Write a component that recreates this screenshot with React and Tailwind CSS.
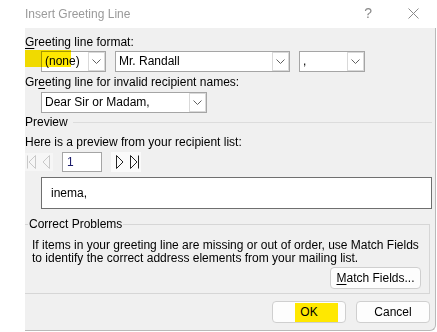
import React from "react";

function Chevron() {
  return (
    <svg width="9" height="5" viewBox="0 0 9 5" className="block">
      <path d="M0.5 0.5 L4.5 4.5 L8.5 0.5" fill="none" stroke="#606060" strokeWidth="1" />
    </svg>
  );
}

function Combo({ text, className = "", h = "h-[21px]" }) {
  return (
    <div className={`flex ${h} border border-[#a5a5a5] bg-white ${className}`}>
      <div className="flex-1 flex items-center pl-[3px] text-black whitespace-nowrap overflow-hidden">{text}</div>
      <div className="w-[17px] flex items-center justify-center border border-[#d9d9d9] bg-white">
        <Chevron />
      </div>
    </div>
  );
}

function NavIcon({ kind, color }) {
  const tri = {
    first: "M10.5 1.5 L10.5 14.5 L4 8 Z",
    prev: "M10.5 1.5 L10.5 14.5 L4 8 Z",
    next: "M3.5 1.5 L3.5 14.5 L10 8 Z",
    last: "M3.5 1.5 L3.5 14.5 L10 8 Z",
  }[kind];
  return (
    <svg width="14" height="16" viewBox="0 0 14 16" className="block">
      <path d={tri} fill="none" stroke={color} strokeWidth="1" strokeLinejoin="miter" />
      {kind === "first" && <path d="M2.5 1.5 L2.5 14.5" stroke={color} strokeWidth="1" />}
      {kind === "last" && <path d="M11.5 1.5 L11.5 14.5" stroke={color} strokeWidth="1" />}
    </svg>
  );
}

function Btn({ children, className = "" }) {
  return (
    <div className={`flex items-center justify-center border border-[#cfcfcf] rounded-[4px] bg-[#fdfdfd] text-black ${className}`}>
      {children}
    </div>
  );
}

export default function App() {
  return (
    <div className="w-[437px] h-[332px] bg-white flex flex-col text-[12px] leading-[15px] text-black font-['Liberation_Sans',Arial,sans-serif] overflow-hidden">
      {/* title bar */}
      <div className="h-[28px] flex items-center pl-[25px] shrink-0">
        <span className="text-[#9a9a9a] text-[12px]">Insert Greeting Line</span>
        <div className="flex-1" />
        <span className="text-[#8a8a8a] text-[14px] leading-none mr-[36px] mb-[2px]">?</span>
        <svg width="11" height="11" viewBox="0 0 11 11" className="mr-[18px] mb-[2px]">
          <path d="M0.5 0.5 L10.5 10.5 M10.5 0.5 L0.5 10.5" stroke="#8a8a8a" strokeWidth="1" />
        </svg>
      </div>
      {/* body */}
      <div className="flex flex-1 mb-[1px]">
        <div className="w-[25px] shrink-0" />
        <div className="w-[411px] bg-[#f0f0f0] border-r border-b border-[#b9b9b9] rounded-br-[6px] flex flex-col relative">
          <div className="mt-[7px]"><span className="underline underline-offset-2">G</span>reeting line format:</div>
          <div className="mt-[1px] flex relative">
            <Combo text="(none)" className="ml-[16px] w-[65px]" />
            <Combo text="Mr. Randall" className="ml-[9px] w-[175px]" />
            <Combo text="," className="ml-[9px] w-[66px]" />
            <div className="absolute left-0 top-[-1px] w-[46px] h-[17px] bg-[#ffe800] mix-blend-multiply" />
          </div>
          <div className="mt-[3px]">Gr<span className="underline underline-offset-2">e</span>eting line for invalid recipient names:</div>
          <div className="mt-[2px] flex">
            <Combo text="Dear Sir or Madam," className="ml-[16px] w-[166px]" h="h-[21px]" />
          </div>
          <div className="mt-[2px] flex items-center">
            <span>Preview</span>
            <div className="flex-1 h-px bg-[#dcdcdc] ml-[5px] mr-[3px]" />
          </div>
          <div className="mt-[5px]">Here is a preview from your recipient list:</div>
          <div className="mt-[2px] flex items-center h-[20px]">
            <div className="flex items-center h-[18px] w-[28px] bg-[#f6f6f6]">
              <NavIcon kind="first" color="#c9c9c9" />
              <NavIcon kind="prev" color="#c9c9c9" />
            </div>
            <div className="ml-[9px] w-[40px] h-[20px] border border-[#a5a5a5] bg-white flex items-center pl-[4px] text-[#1a1a6a]">1</div>
            <div className="ml-[9px] flex items-center h-[20px] w-[30px] bg-[#fafafa] pl-[2px]">
              <NavIcon kind="next" color="#222" />
              <NavIcon kind="last" color="#222" />
            </div>
          </div>
          <div className="mt-[5px] ml-[16px] mr-[3px] h-[32px] border border-[#6f6f6f] bg-white flex items-center pl-[9px]">inema,</div>
          <fieldset className="mt-[8px] w-[405px] border-t border-r border-b border-l-0 border-[#d6d6d6] pb-[4px]">
            <legend className="ml-[3px] px-[1px] leading-[15px]">Correct Problems</legend>
            <div className="mt-[7px] pl-[7px] leading-[13px]">
              <div>If items in your greeting line are missing or out of order, use Match Fields</div>
              <div>to identify the correct address elements from your mailing list.</div>
            </div>
            <div className="flex justify-end mt-[2px] mr-[8px]">
              <Btn className="w-[91px] h-[22px]"><span className="underline underline-offset-2">M</span>atch Fields...</Btn>
            </div>
          </fieldset>
          <div className="mt-[7px] flex justify-end mr-[5px] gap-[10px]">
            <Btn className="w-[74px] h-[22px] relative">
              <div className="absolute left-[22px] top-[1px] w-[43px] h-[19px] bg-[#ffe800]" />
              <span className="relative">OK</span>
            </Btn>
            <Btn className="w-[74px] h-[22px]">Cancel</Btn>
          </div>
        </div>
      </div>
    </div>
  );
}
